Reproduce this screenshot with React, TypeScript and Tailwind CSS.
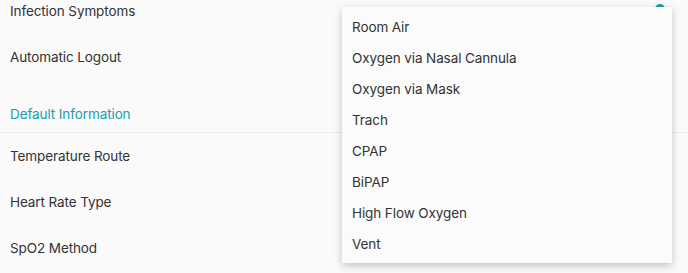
const settings = ["Infection Symptoms", "Automatic Logout"];
const defaults = ["Temperature Route", "Heart Rate Type", "SpO2 Method"];
const options = [
  "Room Air",
  "Oxygen via Nasal Cannula",
  "Oxygen via Mask",
  "Trach",
  "CPAP",
  "BiPAP",
  "High Flow Oxygen",
  "Vent",
];

const Row = ({ label }: { label: string }) => (
  <div className="h-[46px] flex items-center pt-px px-[10px] text-[13.5px] tracking-[-0.1px] text-[#333333]">
    {label}
  </div>
);

export default function App() {
  return (
    <div
      className="relative h-[273px] w-full overflow-hidden bg-[#fafafa]"
      style={{ fontFamily: "Inter, 'Noto Sans', sans-serif" }}
    >
      <div className="-mt-[12px]">
        {settings.map((s) => (
          <Row key={s} label={s} />
        ))}
        <div className="mt-4 h-9 flex items-center pt-px px-[10px] text-[13.5px] tracking-[-0.1px] text-[#1b9cad]">
          Default Information
        </div>
        <div className="h-px bg-[#ebebeb]" />
        {defaults.map((s) => (
          <Row key={s} label={s} />
        ))}
      </div>

      {/* toggle thumb peeking out behind the menu */}
      <div className="absolute left-[655px] top-[4px] h-[10px] w-[10px] rounded-full bg-[#1b9cad]" />

      <div className="absolute left-[342px] top-[7px] w-[330px] bg-[#fbfbfb] py-1 shadow-[0_3px_8px_rgba(0,0,0,0.22)]">
        {options.map((o) => (
          <div
            key={o}
            className="h-[31px] flex items-center pt-px px-[10px] text-[13.5px] tracking-[-0.1px] text-[#333333]"
          >
            {o}
          </div>
        ))}
      </div>
    </div>
  );
}
